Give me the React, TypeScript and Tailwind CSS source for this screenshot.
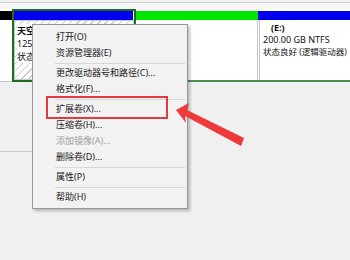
import React from "react";

const font = { fontFamily: '"Noto Sans", "Noto Sans CJK SC", sans-serif' };

type Item = { label: string; disabled?: boolean } | "sep";

const items: Item[] = [
  { label: "打开(O)" },
  { label: "资源管理器(E)" },
  "sep",
  { label: "更改驱动器号和路径(C)..." },
  { label: "格式化(F)..." },
  "sep",
  { label: "扩展卷(X)..." },
  { label: "压缩卷(H)..." },
  { label: "添加镜像(A)...", disabled: true },
  { label: "删除卷(D)..." },
  "sep",
  { label: "属性(P)" },
  "sep",
  { label: "帮助(H)" },
];

export default function App() {
  return (
    <div
      className="relative w-[350px] h-[260px] overflow-hidden bg-[#f0f0f0] text-[9px] text-[#111]"
      style={font}
    >
      <div className="h-[3px] bg-[#f0f0f0] border-b border-[#cfcfcf]" />
      <div className="h-[6px] bg-[#f7f7f7]" />
      {/* disk row */}
      <div className="flex h-[73px] bg-white">
        {/* left label column */}
        <div className="w-[12px] flex flex-col border-b border-[#c8c8c8]">
          <div className="h-[9px] mt-[2px] bg-black" />
          <div className="flex-1 bg-white" />
        </div>
        {/* selected partition */}
        <div className="w-[124px] flex flex-col border-2 border-[#1f6e1f]">
          <div className="h-[9px] bg-[#0000f0] mr-[1px]" />
          <div className="flex-1 border border-[#c8c8c8] bg-[repeating-linear-gradient(135deg,#c8c8c8_0px,#c8c8c8_1px,#ffffff_1px,#ffffff_5px)] px-[2px] pt-[3px] leading-[13px] whitespace-nowrap">
            <div className="font-bold bg-white w-fit">天空 (D:)</div>
            <div className="bg-white w-fit">125.00 GB NTFS</div>
            <div className="bg-white w-fit">状态良好 (主分区)</div>
          </div>
        </div>
        {/* partitions right */}
        <div className="flex-1 flex flex-col">
          <div className="flex-1 flex">
            <div className="w-[122px] flex flex-col">
              <div className="h-[11px] bg-white pt-[2px]">
                <div className="h-[9px] bg-[#00e600]" />
              </div>
              <div className="flex-1 bg-white border-r border-[#c8c8c8]" />
            </div>
            <div className="flex-1 min-w-0 flex flex-col">
              <div className="h-[11px] bg-white pt-[2px]">
                <div className="h-[9px] bg-[#0000f0]" />
              </div>
              <div className="flex-1 bg-white border-l border-[#c8c8c8] ml-[1px] pl-[3px] pt-[2px] leading-[12px] whitespace-nowrap overflow-hidden">
                <div className="font-bold pl-[8px]">(E:)</div>
                <div>200.00 GB NTFS</div>
                <div className="text-[8.5px]">状态良好 (逻辑驱动器)</div>
              </div>
            </div>
          </div>
          <div className="h-[2px] bg-[#4a8f4a]" />
        </div>
      </div>
      {/* lower area */}
      <div className="flex">
        <div className="w-[32px] h-[70px] border-b border-[#c8c8c8]" />
      </div>

      {/* context menu */}
      <div className="absolute left-[32px] top-[24px] w-[156px] bg-[#f2f2f2] border border-[#979797] shadow-[2px_2px_3px_rgba(0,0,0,0.25)] pt-[4px] pb-[3px] whitespace-nowrap">
        {items.map((it, i) =>
          it === "sep" ? (
            <div key={i} className="h-[4px] flex items-center pl-[22px] pr-[2px]">
              <div className="h-[1px] w-full bg-[#d7d7d7]" />
            </div>
          ) : (
            <div
              key={i}
              className={`h-[16px] flex items-center pl-[23px] ${it.disabled ? "text-[#a0a0a0]" : "text-[#1a1a1a]"}`}
            >
              {it.label}
            </div>
          )
        )}
      </div>

      {/* red highlight box */}
      <div className="absolute left-[46px] top-[96px] w-[122px] h-[23px] border-2 border-[#e23b3b]" />

      {/* arrow */}
      <svg className="absolute left-0 top-0" width="350" height="260" viewBox="0 0 350 260">
        <polygon
          points="176,110 189,103 187,110 244,138 241,146 185,116 186,123"
          fill="#ee3a3a"
        />
      </svg>
    </div>
  );
}
